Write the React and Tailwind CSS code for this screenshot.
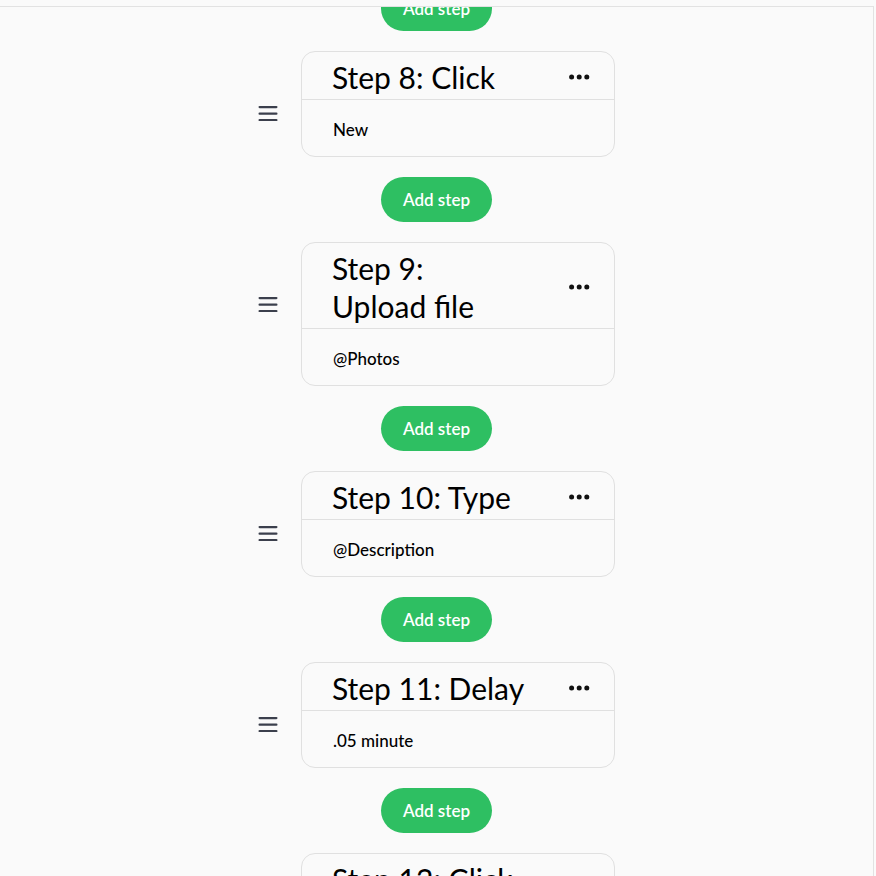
import React from "react";

const steps = [
  { title: "Step 8: Click", detail: "New" },
  { title: "Step 9:", rest: "Upload file", detail: "@Photos" },
  { title: "Step 10: Type", detail: "@Description" },
  { title: "Step 11: Delay", detail: ".05 minute" },
  { title: "Step 12: Click", detail: "Save" },
];

const DragHandle = () => (
  <svg width="20" height="16" viewBox="0 0 20 16" className="mt-[54px] shrink-0">
    <rect x="0.5" y="1" width="19" height="2.2" rx="1.1" fill="#3b3f4c" />
    <rect x="0.5" y="7.6" width="19" height="2.2" rx="1.1" fill="#3b3f4c" />
    <rect x="0.5" y="14" width="19" height="2.2" rx="1.1" fill="#3b3f4c" />
  </svg>
);

const Dots = () => (
  <svg width="21" height="6" viewBox="0 0 21 6" className="shrink-0">
    <circle cx="2.6" cy="3" r="2.5" fill="#111" />
    <circle cx="10.2" cy="3" r="2.5" fill="#111" />
    <circle cx="17.8" cy="3" r="2.5" fill="#111" />
  </svg>
);

const AddStep = () => (
  <button className="h-[45px] w-[111px] shrink-0 rounded-full bg-[#2ebf62] text-[17px] font-semibold text-white">
    Add step
  </button>
);

const StepCard = ({ title, rest, detail }) => (
  <div className="flex items-start gap-[23px]">
    <DragHandle />
    <div className="w-[314px] overflow-hidden rounded-[14px] border border-[#e0e0e0] bg-[#fafafa]">
      <div className="flex items-center border-b border-[#e0e0e0] pl-[30px] pr-[24px] pt-[6px] pb-[3px]">
        <h3 className="w-[215px] text-[30px] font-normal leading-[38px] text-black">
          {title}
          {rest && (
            <>
              {" "}
              <span className="whitespace-nowrap">{rest}</span>
            </>
          )}
        </h3>
        <div className="ml-auto">
          <Dots />
        </div>
      </div>
      <div className="pt-[20px] pb-[16px] pl-[31px] text-[17px] font-medium leading-[20px] text-black">
        {detail}
      </div>
    </div>
  </div>
);

export default function App() {
  return (
    <div
      className="flex h-screen flex-col overflow-hidden bg-[#fafafa]"
      style={{ fontFamily: "Lato, 'Noto Sans', sans-serif" }}
    >
      <div className="h-[6px] shrink-0" />
      <div className="w-[874px] flex-1 overflow-hidden border-t border-r border-[#e2e2e2]">
        <div className="mt-[-21px] flex flex-col items-center gap-[20px]">
          <AddStep />
          {steps.map((s, i) => (
            <React.Fragment key={s.title}>
              <StepCard title={s.title} rest={s.rest} detail={s.detail} />
              {i < steps.length - 1 && <AddStep />}
            </React.Fragment>
          ))}
        </div>
      </div>
    </div>
  );
}
